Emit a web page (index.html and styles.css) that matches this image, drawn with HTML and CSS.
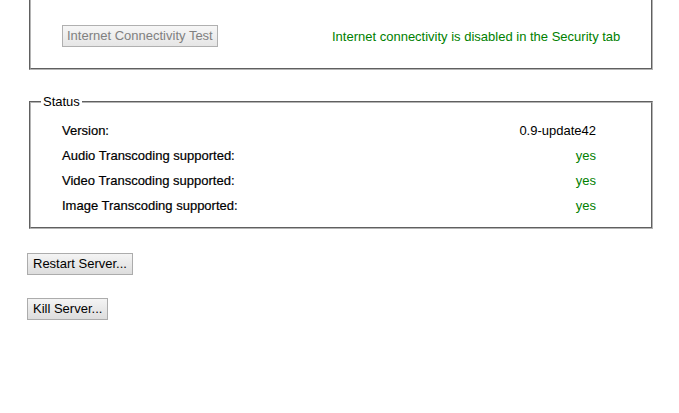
FILE: index.html
```html
<!DOCTYPE html>
<html>
<head>
<meta charset="utf-8">
<link rel="stylesheet" href="styles.css">
</head>
<body>
<div class="page">
  <fieldset class="box box-cut">
    <div class="conn">
      <button class="btn" disabled>Internet Connectivity Test</button>
      <span class="ok">Internet connectivity is disabled in the Security tab</span>
    </div>
  </fieldset>

  <fieldset class="box status">
    <legend class="legend">Status</legend>
    <div class="rows">
      <div class="row"><span class="label">Version:</span><span class="value">0.9-update42</span></div>
      <div class="row"><span class="label">Audio Transcoding supported:</span><span class="value ok">yes</span></div>
      <div class="row"><span class="label">Video Transcoding supported:</span><span class="value ok">yes</span></div>
      <div class="row"><span class="label">Image Transcoding supported:</span><span class="value ok">yes</span></div>
    </div>
  </fieldset>

  <div class="actions">
    <button class="btn">Restart Server...</button>
    <button class="btn">Kill Server...</button>
  </div>
</div>
</body>
</html>
```

FILE: styles.css
```css
html, body {
  margin: 0;
  padding: 0;
  background: #ffffff;
}

body {
  font-family: "Liberation Sans", Arial, sans-serif;
  font-size: 13px;
  color: #000000;
}

.page {
  padding: 0 24px 0 27px;
}

.box {
  margin: 0 2px;
  padding: 0;
  border: 2px groove #b4b4b4;
  min-width: 0;
}

.box-cut {
  border-top-width: 0;
  padding: 25px 0 21px 31px;
}

.conn {
  display: grid;
  grid-template-columns: 270px 1fr;
  align-items: center;
}

.ok {
  color: #008000;
}

.btn {
  font-family: "Liberation Sans", Arial, sans-serif;
  font-size: 13px;
  line-height: 14px;
  color: #000000;
  background: linear-gradient(#f4f4f4, #dddddd);
  border: 1px solid #acacac;
  border-radius: 0;
  padding: 3px 5px;
  margin: 0;
  justify-self: start;
}

.btn:disabled {
  color: #808080;
  background: linear-gradient(#f6f6f6, #e6e6e6);
  border-color: #b0b0b0;
  padding: 3px 4px;
}

.status {
  margin-top: 25px;
  padding: 9px 55px 9px 10px;
}

.legend {
  margin-left: 0;
  padding: 0 2px;
  line-height: 14px;
}

.rows {
  display: flex;
  flex-direction: column;
  padding-left: 21px;
}

.row {
  display: flex;
  justify-content: space-between;
  align-items: center;
  height: 25px;
}

.label {
  color: #000000;
  -webkit-text-stroke: 0.2px #000000;
}

.actions {
  display: flex;
  flex-direction: column;
  align-items: flex-start;
  gap: 23px;
  margin-top: 24px;
}
```
